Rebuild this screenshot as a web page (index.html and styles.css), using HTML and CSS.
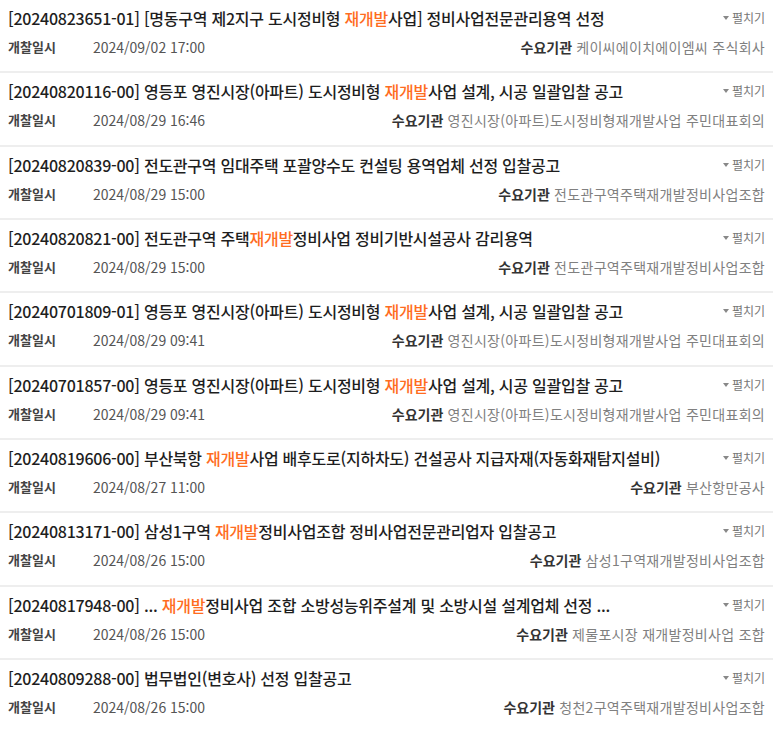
FILE: index.html
```html
<!DOCTYPE html>
<html lang="ko">
<head>
<meta charset="utf-8">
<link rel="stylesheet" href="styles.css">
</head>
<body>
<ul class="list">
  <li class="item">
    <div class="row top"><span class="title">[20240823651-01] [명동구역 제2지구 도시정비형 <em>재개발</em>사업] 정비사업전문관리용역 선정</span><span class="toggle"><i class="tri"></i>펼치기</span></div>
    <div class="row meta"><span class="label">개찰일시</span><span class="date">2024/09/02 17:00</span><span class="org"><b>수요기관</b> 케이씨에이치에이엠씨 주식회사</span></div>
  </li>
  <li class="item">
    <div class="row top"><span class="title">[20240820116-00] 영등포 영진시장(아파트) 도시정비형 <em>재개발</em>사업 설계, 시공 일괄입찰 공고</span><span class="toggle"><i class="tri"></i>펼치기</span></div>
    <div class="row meta"><span class="label">개찰일시</span><span class="date">2024/08/29 16:46</span><span class="org"><b>수요기관</b> 영진시장(아파트)도시정비형재개발사업 주민대표회의</span></div>
  </li>
  <li class="item">
    <div class="row top"><span class="title">[20240820839-00] 전도관구역 임대주택 포괄양수도 컨설팅 용역업체 선정 입찰공고</span><span class="toggle"><i class="tri"></i>펼치기</span></div>
    <div class="row meta"><span class="label">개찰일시</span><span class="date">2024/08/29 15:00</span><span class="org"><b>수요기관</b> 전도관구역주택재개발정비사업조합</span></div>
  </li>
  <li class="item">
    <div class="row top"><span class="title">[20240820821-00] 전도관구역 주택<em>재개발</em>정비사업 정비기반시설공사 감리용역</span><span class="toggle"><i class="tri"></i>펼치기</span></div>
    <div class="row meta"><span class="label">개찰일시</span><span class="date">2024/08/29 15:00</span><span class="org"><b>수요기관</b> 전도관구역주택재개발정비사업조합</span></div>
  </li>
  <li class="item">
    <div class="row top"><span class="title">[20240701809-01] 영등포 영진시장(아파트) 도시정비형 <em>재개발</em>사업 설계, 시공 일괄입찰 공고</span><span class="toggle"><i class="tri"></i>펼치기</span></div>
    <div class="row meta"><span class="label">개찰일시</span><span class="date">2024/08/29 09:41</span><span class="org"><b>수요기관</b> 영진시장(아파트)도시정비형재개발사업 주민대표회의</span></div>
  </li>
  <li class="item">
    <div class="row top"><span class="title">[20240701857-00] 영등포 영진시장(아파트) 도시정비형 <em>재개발</em>사업 설계, 시공 일괄입찰 공고</span><span class="toggle"><i class="tri"></i>펼치기</span></div>
    <div class="row meta"><span class="label">개찰일시</span><span class="date">2024/08/29 09:41</span><span class="org"><b>수요기관</b> 영진시장(아파트)도시정비형재개발사업 주민대표회의</span></div>
  </li>
  <li class="item">
    <div class="row top"><span class="title">[20240819606-00] 부산북항 <em>재개발</em>사업 배후도로(지하차도) 건설공사 지급자재(자동화재탐지설비)</span><span class="toggle"><i class="tri"></i>펼치기</span></div>
    <div class="row meta"><span class="label">개찰일시</span><span class="date">2024/08/27 11:00</span><span class="org"><b>수요기관</b> 부산항만공사</span></div>
  </li>
  <li class="item">
    <div class="row top"><span class="title">[20240813171-00] 삼성1구역 <em>재개발</em>정비사업조합 정비사업전문관리업자 입찰공고</span><span class="toggle"><i class="tri"></i>펼치기</span></div>
    <div class="row meta"><span class="label">개찰일시</span><span class="date">2024/08/26 15:00</span><span class="org"><b>수요기관</b> 삼성1구역재개발정비사업조합</span></div>
  </li>
  <li class="item">
    <div class="row top"><span class="title">[20240817948-00] ... <em>재개발</em>정비사업 조합 소방성능위주설계 및 소방시설 설계업체 선정 ...</span><span class="toggle"><i class="tri"></i>펼치기</span></div>
    <div class="row meta"><span class="label">개찰일시</span><span class="date">2024/08/26 15:00</span><span class="org"><b>수요기관</b> 제물포시장 재개발정비사업 조합</span></div>
  </li>
  <li class="item">
    <div class="row top"><span class="title">[20240809288-00] 법무법인(변호사) 선정 입찰공고</span><span class="toggle"><i class="tri"></i>펼치기</span></div>
    <div class="row meta"><span class="label">개찰일시</span><span class="date">2024/08/26 15:00</span><span class="org"><b>수요기관</b> 청천2구역주택재개발정비사업조합</span></div>
  </li>
</ul>
</body>
</html>
```

FILE: styles.css
```css
html, body {
  margin: 0;
  padding: 0;
  background: #fff;
}
body {
  font-family: "Noto Sans CJK KR", "Noto Sans", sans-serif;
  color: #222;
}
.list {
  list-style: none;
  margin: 0;
  padding: 0;
}
.item {
  padding: 7px 8px 14px 8px;
  border-bottom: 2px solid #eeeeee;
  height: 50.33px;
}
.item:last-child {
  border-bottom: none;
}
.row {
  display: flex;
  align-items: center;
}
.top {
  height: 22px;
}
.title {
  flex: 1;
  font-size: 16px;
  font-weight: 500;
  color: #1e1e1e;
  white-space: nowrap;
  line-height: 22px;
  letter-spacing: -0.25px;
}
.title em {
  font-style: normal;
  color: #ff6d1f;
}
.toggle {
  font-size: 12px;
  color: #777;
  display: flex;
  align-items: center;
  gap: 3px;
  line-height: 16px;
}
.tri {
  width: 0;
  height: 0;
  border-left: 3.5px solid transparent;
  border-right: 3.5px solid transparent;
  border-top: 4px solid #888;
}
.meta {
  margin-top: 8px;
  height: 20px;
  font-size: 14px;
  line-height: 20px;
}
.label {
  width: 85px;
  font-size: 13px;
  font-weight: 700;
  color: #444;
}
.date {
  color: #555;
}
.org {
  margin-left: auto;
  color: #808080;
  letter-spacing: 0.3px;
}
.org b {
  color: #333;
  font-weight: 700;
  letter-spacing: 0;
}
```
